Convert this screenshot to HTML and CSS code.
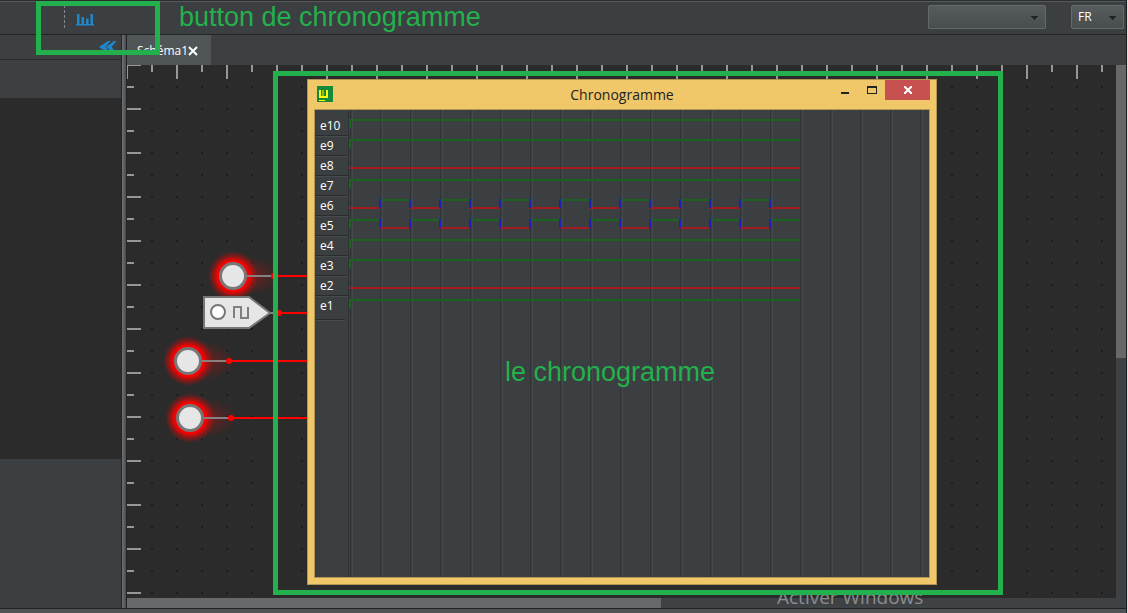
FILE: index.html
```html
<!DOCTYPE html>
<html lang="fr">
<head>
<meta charset="utf-8">
<title>Chronogramme</title>
<link rel="stylesheet" href="styles.css">
</head>
<body>
<div class="app">
  <header class="toolbar">
    <div class="tools">
      <button class="icon-button" type="button" aria-label="Chronogramme">
        <svg width="18" height="13" viewBox="0 0 18 13" fill="#1e88cf"><path d="M0 11h18v1.500H0zM1 1h2.500v10H1zM5.500 4H8v7H5.500zM10 5.500h2.500V11H10zM14.500 1H17v10h-2.500z"/></svg>
      </button>
    </div>
    <div class="pickers">
      <select class="picker picker-wide" aria-label="Composant"><option></option></select>
      <select class="picker picker-lang" aria-label="Langue"><option>FR</option></select>
    </div>
  </header>

  <div class="workspace">
    <aside class="sidebar">
      <div class="sidebar-head">
        <button class="icon-button" type="button" aria-label="Réduire">
          <svg width="18" height="12" viewBox="0 0 18 12" fill="#1e88cf"><path d="M0 6L9 0h2.500L6.500 6l5 6H9zM7 6l8-6h2.500l-5 6 5 6H15z"/></svg>
        </button>
      </div>
      <div class="sidebar-title"></div>
      <div class="sidebar-list"></div>
      <div class="sidebar-props"></div>
    </aside>
    <div class="divider"></div>

    <main class="editor">
      <nav class="tabs">
        <div class="tab">
          <button class="tab-name" type="button">Schéma1</button>
          <button class="tab-close" type="button" aria-label="Fermer l’onglet">
            <svg width="10" height="10" viewBox="0 0 10 10" stroke="#fff" stroke-width="2"><path d="M1 1l8 8M9 1L1 9"/></svg>
          </button>
        </div>
      </nav>
      <div class="board">
        <div class="canvas">
          <svg class="schema" width="100%" height="100%">
            <defs>
              <pattern id="dots" width="25" height="22" patternUnits="userSpaceOnUse">
                <path d="M24 21h1v1h-1zM0 21h1v1H0zM24 0h1v1h-1zM0 0h1v1H0z" fill="#1c1c1c"/>
              </pattern>
              <pattern id="ruler-x" width="50" height="14" patternUnits="userSpaceOnUse">
                <path d="M0 0h1v14H0zM49 0h1v14h-1zM24 0h2v7h-2z" fill="#979797"/>
              </pattern>
              <pattern id="ruler-y" width="14" height="44" patternUnits="userSpaceOnUse">
                <path d="M0 0h14v1H0zM0 43h14v1H0zM0 21h7v2H0z" fill="#979797"/>
              </pattern>
              <radialGradient id="glow">
                <stop offset="0" stop-color="#f00"/>
                <stop offset=".6" stop-color="#f00"/>
                <stop offset=".8" stop-color="#f00" stop-opacity=".4"/>
                <stop offset="1" stop-color="#f00" stop-opacity="0"/>
              </radialGradient>
              <radialGradient id="haze">
                <stop offset="0" stop-color="#f00" stop-opacity=".35"/>
                <stop offset="1" stop-color="#f00" stop-opacity="0"/>
              </radialGradient>
              <g id="lamp">
                <ellipse cx="12" cy="0" rx="36" ry="20" fill="url(#haze)"/>
                <circle r="25" fill="url(#glow)"/>
                <path d="M14 0h27" stroke="#8a7f7f" stroke-width="2"/>
                <circle r="12.500" fill="#e6e6e6" stroke="#777" stroke-width="3"/>
                <circle cx="41" cy="0" r="3" fill="#f00"/>
              </g>
            </defs>
            <rect x="12" y="11" width="100%" height="100%" fill="url(#dots)"/>
            <rect width="100%" height="14" fill="url(#ruler-x)"/>
            <rect width="14" height="100%" fill="url(#ruler-y)"/>
            <g stroke="#f00" stroke-width="2">
              <path d="M147 211H190M152 248H190M102 296H190M104 353H190"/>
            </g>
            <use href="#lamp" x="106" y="211"/>
            <use href="#lamp" x="61" y="296"/>
            <use href="#lamp" x="63" y="353"/>
            <path d="M143 248h8" stroke="#888" stroke-width="2"/>
            <path d="M77 232h45l21 16-21 15H77z" fill="#e6e6e6" stroke="#777" stroke-width="2"/>
            <circle cx="91" cy="247" r="7" fill="#fff" stroke="#777" stroke-width="2"/>
            <path d="M107 253v-11h7v11h7v-11" fill="none" stroke="#808080" stroke-width="2"/>
            <circle cx="152" cy="248" r="3" fill="#f00"/>
          </svg>

          <section class="window" aria-label="Chronogramme">
            <header class="titlebar">
              <svg class="logo" width="16" height="16" viewBox="0 0 16 16"><path d="M0 0h16v16H0z" fill="#17893a"/><path d="M3 4v7h7V4" fill="none" stroke="#ff0" stroke-width="2"/><path d="M6 4v6M2 14.500h6" stroke="#ff0"/></svg>
              <h1 class="window-title">Chronogramme</h1>
              <div class="window-buttons">
                <button class="win-button" type="button" aria-label="Réduire"><svg width="8" height="2"><path d="M0 0h8v2H0z" fill="#222"/></svg></button>
                <button class="win-button" type="button" aria-label="Agrandir"><svg width="10" height="8" viewBox="0 0 10 8"><path d="M0 0h10v8H0zM1 2v5h8V2z" fill="#222" fill-rule="evenodd"/></svg></button>
                <button class="win-button win-close" type="button" aria-label="Fermer"><svg width="8" height="8" viewBox="0 0 8 8" stroke="#fff" stroke-width="2"><path d="M0 0l8 8M8 0L0 8"/></svg></button>
              </div>
            </header>
            <div class="chart">
              <ul class="signals">
                <li>e10</li><li>e9</li><li>e8</li><li>e7</li><li>e6</li><li>e5</li><li>e4</li><li>e3</li><li>e2</li><li>e1</li>
              </ul>
              <div class="plot">
                <svg width="451" height="200" viewBox="0 0 451 200" fill="none" stroke-width="2">
                  <g stroke="#1b641f">
                    <path d="M1 12V4H451M1 32V24H451M1 72V64H451M1 132V124H451M1 152V144H451M1 192V184H451"/>
                    <path d="M31 84h30M91 84h30M151 84h30M211 84h30M271 84h30M331 84h30M391 84h30"/>
                    <path d="M1 112v-8h30M61 104h30M121 104h30M181 104h30M241 104h30M301 104h30M361 104h30M421 104h30"/>
                  </g>
                  <g stroke="#a01c20">
                    <path d="M0 52H451M0 172H451"/>
                    <path d="M0 92h31M61 92h30M121 92h30M181 92h30M241 92h30M301 92h30M361 92h30M421 92h30"/>
                    <path d="M31 112h30M91 112h30M151 112h30M211 112h30M271 112h30M331 112h30M391 112h30"/>
                  </g>
                  <path stroke="#1f1fb0" d="M31 83v9M61 83v9M91 83v9M121 83v9M151 83v9M181 83v9M211 83v9M241 83v9M271 83v9M301 83v9M331 83v9M361 83v9M391 83v9M421 83v9M31 103v9M61 103v9M91 103v9M121 103v9M151 103v9M181 103v9M211 103v9M241 103v9M271 103v9M301 103v9M331 103v9M361 103v9M391 103v9M421 103v9"/>
                </svg>
              </div>
            </div>
          </section>
          <p class="note note-chart">le chronogramme</p>
        </div>
        <div class="scroll-y"><div class="thumb-y"></div></div>
        <div class="scroll-x"><div class="thumb-x"></div></div>
      </div>
    </main>
  </div>
  <footer class="statusbar"></footer>

  <p class="watermark">Activer Windows</p>
  <p class="note note-button">button de chronogramme</p>
  <div class="frame frame-button"></div>
  <div class="frame frame-chart"></div>
</div>
</body>
</html>
```
FILE: styles.css
```css
* { box-sizing: border-box; }
body {
  margin: 0;
  background: #dcdcdc;
  font: 12px/20px "Open Sans", "Noto Sans", sans-serif;
  color: #fff;
}
button { border: 0; padding: 0; background: none; font: inherit; color: inherit; }
svg { display: block; }
p, h1, ul { margin: 0; padding: 0; }

.app {
  position: relative;
  display: flex;
  flex-direction: column;
  height: 100vh;
  margin-right: 1px;
  border-right: 1px solid #1e1f21;
  background: #3c3f41;
  overflow: hidden;
}

.toolbar {
  flex: none;
  display: flex;
  justify-content: space-between;
  height: 35px;
  padding: 4px 2px 0 64px;
  border-top: 1px solid #2b2c2e;
  border-bottom: 1px solid #222325;
  background: #3c3f41;
  box-shadow: inset 0 1px #56595b;
}
.tools { height: 23px; padding: 7px 11px; border-left: 1px dashed #85888a; }
.pickers { display: flex; gap: 25px; }
.picker {
  appearance: none;
  height: 24px;
  padding: 0 6px;
  border: 1px solid #65696b;
  border-radius: 2px;
  background-image: linear-gradient(135deg, #222 50%, transparent 50%), linear-gradient(225deg, #222 50%, transparent 50%), linear-gradient(#565b5d, #484d4d);
  background-position: right 6px top 10px, right 10px top 10px, 0 0;
  background-size: 4px 4px, 4px 4px, auto;
  background-repeat: no-repeat;
  color: #fff;
  font: inherit;
}
.picker-wide { width: 118px; }
.picker-lang { width: 53px; }

.workspace { flex: 1; min-height: 0; display: flex; }
.sidebar { flex: none; width: 121px; display: flex; flex-direction: column; }
.sidebar-head {
  display: flex;
  justify-content: flex-end;
  height: 25px;
  padding: 6px 4px;
  border-bottom: 1px solid #2a2b2d;
  background: #3e3f41;
}
.sidebar-title { height: 38px; background: #3e3f41; }
.sidebar-list { flex: 361; background: #2b2b2b; }
.sidebar-props { flex: 149; background: #3c3f41; }
.divider {
  flex: none;
  width: 6px;
  border: solid #242527;
  border-width: 0 1px;
  background: linear-gradient(90deg, #707376, #484b4e);
}

.editor { flex: 1; min-width: 0; display: flex; flex-direction: column; }
.tabs { flex: none; display: flex; height: 30px; background: #3e3f41; }
.tab { display: flex; align-items: center; width: 84px; padding: 1px 0 0 10px; background: #505557; }

.board {
  flex: 1;
  min-height: 0;
  display: grid;
  grid-template: 1fr 10px / 1fr 10px;
  background: #3e4245;
}
.canvas { position: relative; min-height: 0; background: #2b2b2b; overflow: hidden; }
.thumb-y { height: 55%; background: #67686a; }
.thumb-x { width: 54%; height: 100%; background: #67686a; }
.statusbar { flex: none; height: 5px; border-top: 1px solid #222325; background: #505356; }

.window {
  position: absolute;
  left: 180px;
  top: 14px;
  display: flex;
  flex-direction: column;
  width: 630px;
  height: 506px;
  padding: 0 6px 6px;
  border: 1px solid #b39654;
  background: #f0c869;
}
.titlebar { display: grid; grid-template-columns: 1fr auto 1fr; height: 29px; }
.logo { margin: 6px 3px; }
.window-title { font-size: 14px; font-weight: 400; line-height: 30px; color: #222; }
.window-buttons { display: flex; justify-content: flex-end; }
.win-button { display: grid; place-items: center; width: 27px; height: 20px; }
.win-button:first-child { padding-top: 6px; }
.win-close { width: 45px; background: #c75050; }
.chart { flex: 1; display: flex; border: 1px solid #b39654; background: #3c3f41; }
.signals { width: 33px; padding-top: 6px; list-style: none; }
.signals li { height: 20px; padding-left: 5px; border-bottom: 1px solid #2a2c2e; box-shadow: 0 1px #484b4d; }
.signals li:last-child { width: 30px; height: 24px; }
.plot {
  flex: 1;
  padding-top: 6px;
  border-left: 1px solid #303335;
  background: repeating-linear-gradient(90deg, #313436 0 1px, #3c3f41 1px 2px, #45494b 2px 3px, #3c3f41 3px 30px) 1px 0;
}

.note {
  position: absolute;
  font: 27px/32px "Liberation Sans", Arial, sans-serif;
  color: #22b14c;
  white-space: nowrap;
}
.note-button { left: 179px; top: 1px; }
.note-chart { left: 378px; top: 291px; }
.frame { position: absolute; border: 5px solid #22b14c; pointer-events: none; }
.frame-button { left: 36px; top: 1px; width: 124px; height: 54px; }
.frame-chart { left: 273px; top: 71px; width: 730px; height: 524px; }
.watermark {
  position: absolute;
  left: 777px;
  top: 584px;
  font-size: 19px;
  line-height: 26px;
  color: #8b8d8e;
  white-space: nowrap;
}
```
